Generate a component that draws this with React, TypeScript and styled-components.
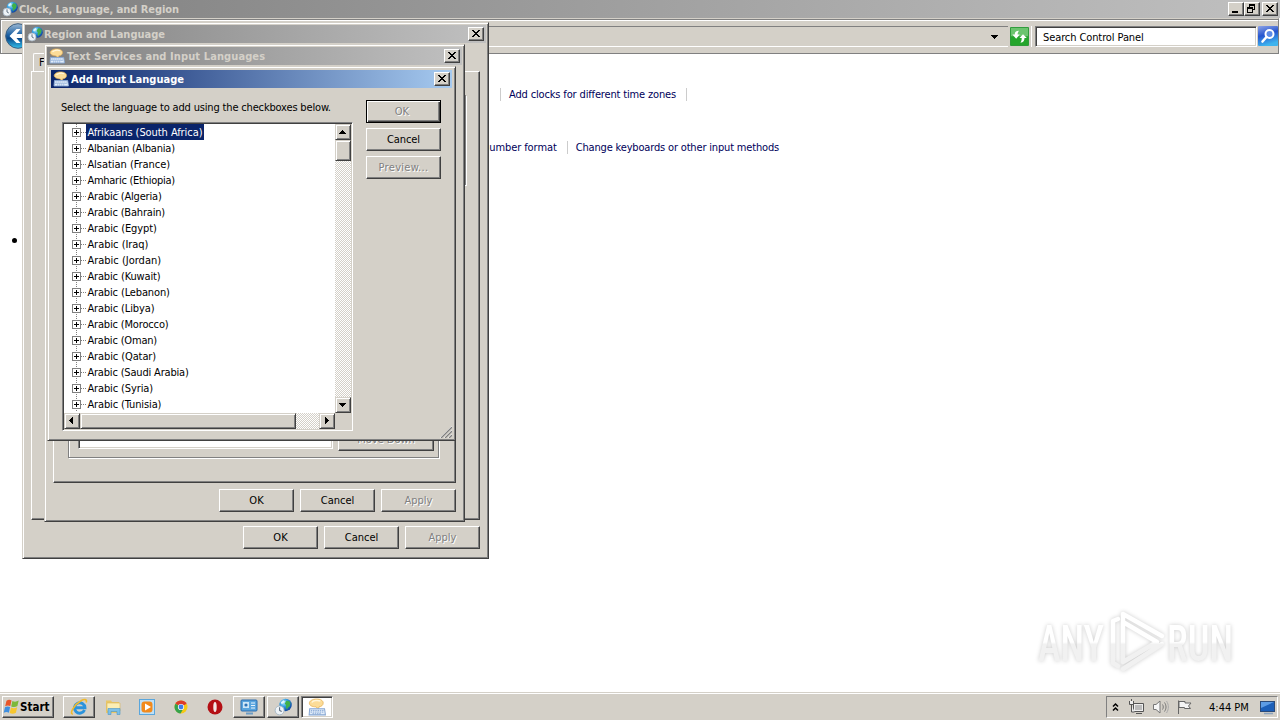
import React from 'react';
import styled, { createGlobalStyle, css } from 'styled-components';

const FACE = '#d4d0c8';
const FONT = "'DejaVu Sans Condensed', 'DejaVu Sans', sans-serif";

const Global = createGlobalStyle`
  * { box-sizing: border-box; }
  html, body { margin: 0; padding: 0; }
  body { width: 1280px; height: 720px; overflow: hidden; background: #fff; font: 11px ${FONT}; font-stretch: condensed; color: #000; }
`;

const raised = css`
  border: 1px solid;
  border-color: #fff #404040 #404040 #fff;
  box-shadow: inset -1px -1px 0 #808080;
`;

const sunken = css`
  border: 1px solid;
  border-color: #808080 #fff #fff #808080;
  box-shadow: inset 1px 1px 0 #404040, inset -1px -1px 0 ${FACE};
`;

const Txt = styled.span<{ $ls?: number; $b?: boolean }>`
  white-space: nowrap;
  letter-spacing: ${p => p.$ls ?? 0}px;
  font-weight: ${p => (p.$b ? 700 : 400)};
`;

const Desktop = styled.div`
  position: relative;
  display: flex;
  flex-direction: column;
  width: 1280px;
  height: 720px;
  overflow: hidden;
  background: #fff;
`;

const TitleBar = styled.div<{ $from: string; $to: string; $fg: string; $gap: number }>`
  display: flex;
  align-items: center;
  flex: none;
  height: 18px;
  padding: 0 2px;
  gap: ${p => p.$gap}px;
  background: linear-gradient(90deg, ${p => p.$from}, ${p => p.$to});
  color: ${p => p.$fg};
  & > svg { flex: none; }
`;

const Spacer = styled.div`flex: 1;`;

const CaptionGroup = styled.div`
  display: flex;
`;

const CaptionBtn = styled.div<{ $gap?: number }>`
  display: flex;
  flex: none;
  align-items: center;
  justify-content: center;
  width: 16px;
  height: 14px;
  padding: 0 1px 1px 0;
  margin-left: ${p => p.$gap ?? 0}px;
  background: ${FACE};
  ${raised}
`;

const NavBar = styled.div`
  display: flex;
  flex: none;
  align-items: stretch;
  height: 36px;
  width: 1279px;
  padding: 6px 0 6px 4px;
  background: ${FACE};
  border: solid #808080;
  border-width: 1px;
  border-top-color: ${FACE};
  box-shadow: inset 0 1px 0 #808080, inset 1px 2px 0 #fff;
  & > svg { flex: none; align-self: center; }
`;

const AddressBox = styled.div`
  display: flex;
  flex: 1;
  align-items: center;
  justify-content: flex-end;
  margin: 1px 0 0 4px;
  padding-right: 9px;
  border: solid;
  border-width: 1px 0;
  border-color: #808080 #fff #fff;
`;

const RefreshBtn = styled.div`
  display: flex;
  width: 24px;
  margin-top: 1px;
  padding: 1px 2px;
  border-right: 1px solid #fff;
`;

const SearchBox = styled.div`
  display: flex;
  align-items: center;
  width: 222px;
  margin: 1px 1px 0 3px;
  padding: 1px 0 0 7px;
  background: #fff;
  ${sunken}
`;

const Content = styled.div`
  flex: 1;
  display: flex;
  flex-direction: column;
  padding-top: 33px;
  color: #00005a;
`;

const LinkRow = styled.div<{ $left: number; $mb?: number }>`
  display: flex;
  align-items: center;
  height: 14px;
  margin: 0 0 ${p => p.$mb ?? 0}px ${p => p.$left}px;
`;

const Sep = styled.i<{ $l?: number; $r?: number }>`
  width: 1px;
  height: 13px;
  margin: 0 ${p => p.$r ?? 0}px 0 ${p => p.$l ?? 0}px;
  background: #ccc;
`;

const Dot = styled.div`
  width: 5px;
  height: 5px;
  margin: 84px 0 0 12px;
  border-radius: 50%;
  background: #000;
`;

const Win = styled.section<{ $x: number; $y: number; $w: number; $h: number; $frame: number }>`
  position: absolute;
  left: ${p => p.$x}px;
  top: ${p => p.$y}px;
  width: ${p => p.$w}px;
  height: ${p => p.$h}px;
  display: flex;
  flex-direction: column;
  padding: ${p => p.$frame - 1}px;
  background: ${FACE};
  border: 1px solid;
  border-color: ${FACE} #404040 #404040 ${FACE};
  box-shadow: inset 1px 1px 0 #fff, inset -1px -1px 0 #808080;
`;

const Button = styled.div<{ $disabled?: boolean; $default?: boolean; $w?: number }>`
  display: flex;
  flex: none;
  align-items: center;
  justify-content: center;
  width: ${p => p.$w ?? 75}px;
  height: 23px;
  padding: 0 0 1px;
  background: ${FACE};
  ${raised}
  ${p => p.$default && css`
    border-color: #000;
    box-shadow: inset 1px 1px 0 #fff, inset -1px -1px 0 #404040, inset -2px -2px 0 #808080;
  `}
  ${p => p.$disabled && css`color: #808080; text-shadow: 1px 1px 0 #fff;`}
`;

const ButtonRow = styled.div<{ $top: number; $right: number }>`
  display: flex;
  justify-content: flex-end;
  gap: 6px;
  margin: ${p => p.$top}px ${p => p.$right}px 0 0;
`;

const RegionTabs = styled.div`
  display: flex;
  height: 18px;
  margin: 10px 0 0 8px;
`;

const Tab = styled.div`
  width: 53px;
  padding: 2px 0 0 5px;
  border: solid #fff;
  border-width: 1px 0 0 1px;
  border-radius: 2px 0 0 0;
`;

const Page = styled.div<{ $w: number; $h: number; $x: number }>`
  display: flex;
  flex: none;
  width: ${p => p.$w}px;
  height: ${p => p.$h}px;
  margin-left: ${p => p.$x}px;
  ${raised}
`;

const Group = styled.div<{ $w: number; $h: number; $m: string }>`
  display: flex;
  align-items: flex-end;
  width: ${p => p.$w}px;
  height: ${p => p.$h}px;
  margin: ${p => p.$m};
  padding: 0 4px 6px 9px;
  gap: 5px;
  border: 1px solid #808080;
  box-shadow: 1px 1px 0 #fff, inset 1px 1px 0 #fff;
`;

const InstalledList = styled.div`
  width: 255px;
  height: 300px;
  margin-bottom: 2px;
  background: #fff;
  ${sunken}
`;

const DialogBody = styled.div`
  display: flex;
  padding: 11px 0 0 11px;
  gap: 13px;
`;

const LeftColumn = styled.div`
  width: 291px;
`;

const Prompt = styled.div`
  height: 23px;
  line-height: 16px;
  padding-top: 1px;
  margin-left: -1px;
`;

const ListFrame = styled.div`
  display: grid;
  grid-template-columns: 271px 16px;
  grid-template-rows: 289px 16px;
  width: 291px;
  height: 309px;
  padding: 1px;
  background: ${FACE};
  ${sunken}
`;

const Tree = styled.ul`
  margin: 0;
  padding: 0;
  list-style: none;
  background: #fff;
  overflow: hidden;
`;

const Node = styled.li`
  display: flex;
  align-items: center;
  height: 16px;
  padding-left: 8px;
  & > svg { flex: none; }
`;

const NodeLabel = styled.span<{ $sel: boolean }>`
  display: flex;
  align-items: center;
  height: 16px;
  padding: 0 2px 0 1.4px;
  ${p => p.$sel && css`background: #0a246a; color: #fff;`}
`;

const Scroll = styled.div<{ $v?: boolean }>`
  display: flex;
  flex-direction: ${p => (p.$v ? 'column' : 'row')};
  background: repeating-conic-gradient(#fff 0 25%, ${FACE} 0 50%) 0 0 / 2px 2px;
`;

const ScrollPart = styled.div<{ $w?: number; $h?: number }>`
  display: flex;
  flex: none;
  align-items: center;
  justify-content: center;
  width: ${p => p.$w ?? 16}px;
  height: ${p => p.$h ?? 16}px;
  background: ${FACE};
  border: 1px solid;
  border-color: ${FACE} #404040 #404040 ${FACE};
  box-shadow: inset 1px 1px 0 #fff, inset -1px -1px 0 #808080;
`;

const RightColumn = styled.div`
  display: flex;
  flex-direction: column;
  gap: 5px;
  padding-top: 1px;
`;

const Grip = styled.svg`
  position: absolute;
  right: 3px;
  bottom: 2px;
`;

const Watermark = styled.svg`
  position: absolute;
  left: 1030px;
  top: 602px;
  filter: drop-shadow(0 0 2px rgba(0, 0, 0, 0.2));
`;

const Taskbar = styled.footer`
  display: flex;
  flex: none;
  height: 28px;
  padding: 3px 2px 2px;
  background: ${FACE};
  box-shadow: inset 0 1px 0 #fff;
  border-top: 1px solid ${FACE};
`;

const StartBtn = styled.div`
  display: flex;
  align-items: center;
  width: 52px;
  height: 22px;
  margin-right: 9px;
  padding: 0 0 1px 0;
  font-size: 11.5px;
  ${raised}
  & > svg { flex: none; }
`;

const TaskBtn = styled.div<{ $state?: 'open' | 'active' }>`
  display: flex;
  align-items: center;
  justify-content: center;
  width: 32px;
  height: 22px;
  margin-right: 2px;
  ${p => p.$state === 'open' && raised}
  ${p => p.$state === 'active' && css`${sunken} background: #fff;`}
`;

const Tray = styled.div`
  display: flex;
  align-items: center;
  width: 172px;
  height: 22px;
  padding-left: 5px;
  gap: 7px;
  border: 1px solid;
  border-color: #808080 #fff #fff #808080;
  & > svg:first-child { margin-right: 2px; }
`;

const Clock = styled.div`
  margin: 0 4px 0 9px;
  white-space: nowrap;
`;

const CloseX = () => (
  <svg width="8" height="7" viewBox="0 0 8 7" shapeRendering="crispEdges">
    <path d="M0 0h2v1h1v1h2v-1h1v-1h2v1h-1v1h-1v1h-1v1h1v1h1v1h1v1h-2v-1h-1v-1h-2v1h-1v1h-2v-1h1v-1h1v-1h1v-1h-1v-1h-1v-1h-1z" />
  </svg>
);

const MinIcon = () => (
  <svg width="10" height="8" shapeRendering="crispEdges"><path d="M1 6h6v2H1z" /></svg>
);

const RestoreIcon = () => (
  <svg width="9" height="9" viewBox="0 0 9 9" shapeRendering="crispEdges">
    <path d="M2 0h6v6H6V5h1V2H3v1H2zM0 3h6v6H0zM1 5v3h4V5z" fillRule="evenodd" />
  </svg>
);

const GlobeClock = ({ size = 16 }: { size?: number }) => (
  <svg width={size} height={size} viewBox="0 0 16 16">
    <defs>
      <radialGradient id="globe" cx="0.35" cy="0.3" r="0.75">
        <stop offset="0" stopColor="#b5ecfb" /><stop offset="0.45" stopColor="#2f9be0" /><stop offset="1" stopColor="#0c3f9a" />
      </radialGradient>
    </defs>
    <circle cx="10.300" cy="6.200" r="5.500" fill="url(#globe)" />
    <path d="M11 2.500c1.500-.5 3 .3 3.600 1.800l-.6 3-1.600 1.200-.8 1.800-1-2 .2-2-1.300-1.300z" fill="#3fb04a" />
    <path d="M6 4l2.500-2 1.200 1L7 5.500z" fill="#e4f7fd" />
    <circle cx="5" cy="11" r="4" fill="#eef3f7" stroke="#a4b4c2" strokeWidth="0.800" />
    <path d="M5 8.300V11l1.800 1" stroke="#567" strokeWidth="0.900" fill="none" />
  </svg>
);

const KeyboardIcon = ({ size = 16 }: { size?: number }) => (
  <svg width={size} height={size} viewBox="0 0 16 16">
    <path d="M7.500.9c3.500 0 6 1.300 6 3.500S11.800 7.600 9.800 7.800L9.300 9.700 7 7.900C3.500 7.800 1.200 6.600 1.200 4.600S4 .9 7.500.9z" fill="#fcdc98" stroke="#e6b257" strokeWidth="0.700" />
    <path d="M3.500 4c1-1.800 5-2.300 7.500-1.300" stroke="#fff6dc" strokeWidth="1.300" fill="none" />
    <path d="M1.500 9.500h13.200l.8 5.500H1z" fill="#e2edfa" stroke="#86a6d2" strokeWidth="0.900" />
    <path d="M2.500 11h11.500M2.300 12.500h12M4 14h8" stroke="#7c9fd0" strokeWidth="0.800" strokeDasharray="1.300 0.700" />
  </svg>
);

const Plus = () => (
  <svg width="14" height="16" shapeRendering="crispEdges">
    <path d="M4.500 0v16M5 8.500h9" stroke="#808080" strokeDasharray="1 1" />
    <path d="M.5 4.500h8v8h-8z" fill="#fff" stroke="#808080" />
    <path d="M2 8.500h5M4.500 6v5" stroke="#000" />
  </svg>
);

const Arrow = ({ d }: { d: string }) => (
  <svg width="8" height="8" shapeRendering="crispEdges"><path d={d} /></svg>
);
const UP = 'M3 2h1v1h1v1h1v1h1v1H0V5h1V4h1V3h1z';
const DOWN = 'M0 2h7v1H6v1H5v1H4v1H3V5H2V4H1V3H0z';
const LEFT = 'M5 0v7H4V6H3V5H2V4H1V3h1V2h1V1h1V0z';
const RIGHT = 'M2 0v7h1V6h1V5h1V4h1V3H5V2H4V1H3V0z';

const BackOrb = () => (
  <svg width="26" height="26" viewBox="0 0 26 26">
    <defs>
      <linearGradient id="orb" x1="0" y1="0" x2="0" y2="1">
        <stop offset="0" stopColor="#9db9d4" /><stop offset="0.45" stopColor="#1d62a4" /><stop offset="0.6" stopColor="#0b4a8c" /><stop offset="1" stopColor="#35c3ee" />
      </linearGradient>
    </defs>
    <circle cx="13" cy="13" r="12.300" fill="url(#orb)" stroke="#3d5f80" />
    <path d="M4.500 13l7-7H15.500L11.500 11H22v4H11.500l4 5H11.500z" fill="#fff" />
  </svg>
);

const RefreshIcon = () => (
  <svg width="20" height="19" viewBox="0 0 20 20" preserveAspectRatio="none">
    <rect width="20" height="20" rx="1" fill="#2f9a3a" />
    <rect x="1" y="1" width="18" height="9" fill="#6cc46f" />
    <rect x="1" y="10" width="18" height="9" fill="#25a52c" />
    <path d="M9.500 4C6 4 5 5.500 5 8H2.500L6.500 12.300 10.300 8H8C8 6.500 8.300 5.500 9.500 4z" fill="#fff" />
    <path d="M11 16.500c3.200 0 4.200-2 4.200-4.800h2.500L13.700 7.500 10 11.700h2.300c0 2-.1 3.200-1.300 4.800z" fill="#fff" />
  </svg>
);

const SearchIcon = () => (
  <svg width="20" height="20" viewBox="0 0 20 20">
    <defs>
      <linearGradient id="srch" x1="0" y1="0" x2="0.3" y2="1">
        <stop offset="0" stopColor="#8fa4e6" /><stop offset="0.5" stopColor="#2555cf" /><stop offset="1" stopColor="#3fb4ee" />
      </linearGradient>
    </defs>
    <rect width="20" height="20" rx="1" fill="url(#srch)" />
    <circle cx="11.500" cy="8" r="4" fill="#5d8be6" stroke="#fff" strokeWidth="2" />
    <path d="M8.500 11L4.500 15.500" stroke="#fff" strokeWidth="2.600" strokeLinecap="round" />
  </svg>
);

const WinFlag = () => (
  <svg width="17" height="18" viewBox="0 0 17 16" preserveAspectRatio="none">
    <path d="M3.500 2.500C5.500 1.300 7 1.500 8.500 2.300L7.300 7.200C5.500 6.300 4 6.400 2.200 7.300z" fill="#e8562a" />
    <path d="M9.400 2.700c2 .9 4 .8 6.300-.4L14.400 7.200c-2 1.100-4 1.200-6.200.3z" fill="#7db83a" />
    <path d="M2 8.200c1.800-.9 3.300-1 5.100-.1L5.900 13c-1.700-.9-3.400-.8-5.200.1z" fill="#3f8fe0" />
    <path d="M8 8.500c2 .9 4 .8 6.200-.3L12.900 13c-2 1.100-4 1.200-6.200.4z" fill="#f7c62f" />
  </svg>
);

const IEIcon = () => (
  <svg width="18" height="18" viewBox="0 0 18 18">
    <path d="M14.500 12A5.200 5.200 0 1 1 14.900 9.700H6" fill="none" stroke="#2b93dc" strokeWidth="3" />
    <path d="M3 16C-1 16.500 3.500 7 11 2.800c3-1.800 6.500-2 5.200 1.700" stroke="#f0b92c" strokeWidth="1.600" fill="none" />
  </svg>
);

const FolderIcon = () => (
  <svg width="18" height="18" viewBox="0 0 18 18">
    <path d="M2 2.500h5l1 1.500h7v11H2z" fill="#e9c767" />
    <path d="M3 5h13v8H3z" fill="#fbeeb4" stroke="#d9b65a" strokeWidth="0.600" />
    <path d="M4 16.500V10.500h12v6h-3v-3H7v3z" fill="#7cc0e8" stroke="#4a93c4" strokeWidth="0.600" />
  </svg>
);

const MediaIcon = () => (
  <svg width="18" height="18" viewBox="0 0 18 18">
    <rect x="1.500" y="1.500" width="15" height="15" fill="#bfe0f6" stroke="#5aa6dc" />
    <rect x="3.500" y="3.500" width="11" height="11" rx="3" fill="#f28a1c" />
    <path d="M7 5.500v7L13 9z" fill="#fff" />
  </svg>
);

const ChromeIcon = () => (
  <svg width="16" height="16" viewBox="0 0 16 16">
    <circle cx="8" cy="8" r="6.500" fill="#f6c915" />
    <path d="M8 8L2.400 4.700A6.500 6.500 0 0 1 13.600 4.700z" fill="#dc3b2b" />
    <path d="M8 8L2.400 4.700A6.500 6.500 0 0 0 7.500 14.500L10.500 9.500z" fill="#35a24c" />
    <circle cx="8" cy="8" r="3.100" fill="#fff" /><circle cx="8" cy="8" r="2.400" fill="#3f7de8" />
  </svg>
);

const OperaIcon = () => (
  <svg width="16" height="16" viewBox="0 0 16 16">
    <circle cx="8" cy="8" r="7.500" fill="#b40f14" />
    <ellipse cx="8" cy="8" rx="1.700" ry="5" fill="#f3e6e4" />
  </svg>
);

const PanelIcon = () => (
  <svg width="18" height="18" viewBox="0 0 18 18">
    <rect x="1" y="2" width="16" height="11" rx="1" fill="#5aa5de" stroke="#2a6daf" />
    <rect x="3" y="4" width="6" height="6" fill="#cfe6f7" />
    <path d="M11 5h4M11 7.500h4M11 10h4" stroke="#e6f3fc" />
    <circle cx="6" cy="7" r="1.600" fill="#2d72b6" />
    <path d="M6 15.500h7" stroke="#6d9cc4" strokeWidth="2" />
  </svg>
);

const TrayIcons = () => (
  <>
    <svg width="7" height="11"><path d="M1 4.500L3.500 2 6 4.500M1 8.500L3.500 6 6 8.500" fill="none" stroke="#000" strokeWidth="1.500" /></svg>
    <svg width="17" height="16" viewBox="0 0 17 16">
      <path d="M5.500 4.500h10v8h-10zM8 14.500h6" fill="#eee" stroke="#555" />
      <path d="M7 6h7v5H7z" fill="#bbb" />
      <path d="M1.500 2v3.500h4V2M3.500 0v2M3.500 5.500V13h3" fill="#eee" stroke="#555" />
    </svg>
    <svg width="17" height="16" viewBox="0 0 17 16" fill="none" stroke="#777">
      <path d="M1.500 5.500h2.500l4-3.500v12L4 10.500H1.500z" fill="#f6f6f6" />
      <path d="M10.500 5.500c1 1.500 1 3.500 0 5M12.500 3.500c2 3 2 6 0 9" /><path d="M14.500 2c2.500 4 2.500 8 0 12" stroke="#aaa" />
    </svg>
    <svg width="17" height="16" viewBox="0 0 17 16"><path d="M2.500 1.500V15M3 2.500h6v1.500h6l-2.500 3 2 2.500H8.500V8.500H3z" fill="#f4f4f4" stroke="#666" /></svg>
  </>
);

const DesktopIcon = () => (
  <svg width="16" height="16" viewBox="0 0 16 16">
    <rect x="0.500" y="2.500" width="14" height="10" fill="#1c5fb8" stroke="#2b4a78" />
    <path d="M1 3h13L1 9z" fill="#5d9ce4" />
    <path d="M4 14.500h9" stroke="#8ba3bd" strokeWidth="1.500" />
  </svg>
);

const LANGS: [string, number][] = [
  ['Afrikaans (South Africa)', -0.07], ['Albanian (Albania)', -0.2], ['Alsatian (France)', -0.04], ['Amharic (Ethiopia)', -0.26],
  ['Arabic (Algeria)', -0.17], ['Arabic (Bahrain)', -0.18], ['Arabic (Egypt)', -0.1], ['Arabic (Iraq)', -0.04], ['Arabic (Jordan)', 0],
  ['Arabic (Kuwait)', -0.14], ['Arabic (Lebanon)', -0.14], ['Arabic (Libya)', -0.12], ['Arabic (Morocco)', -0.16], ['Arabic (Oman)', -0.18],
  ['Arabic (Qatar)', -0.1], ['Arabic (Saudi Arabia)', -0.18], ['Arabic (Syria)', -0.12], ['Arabic (Tunisia)', -0.12],
];

const INACTIVE = { $from: '#808080', $to: '#c0c0c0', $fg: '#d4d0c8' };

export default function App() {
  return (
    <Desktop>
      <Global />
      <TitleBar {...INACTIVE} $gap={1}>
        <GlobeClock />
        <Txt $b $ls={-0.07}>Clock, Language, and Region</Txt>
        <Spacer />
        <CaptionGroup>
          <CaptionBtn><MinIcon /></CaptionBtn>
          <CaptionBtn><RestoreIcon /></CaptionBtn>
          <CaptionBtn $gap={2}><CloseX /></CaptionBtn>
        </CaptionGroup>
      </TitleBar>
      <NavBar>
        <BackOrb />
        <AddressBox><Arrow d={DOWN} /></AddressBox>
        <RefreshBtn><RefreshIcon /></RefreshBtn>
        <SearchBox><Txt $ls={-0.1}>Search Control Panel</Txt></SearchBox>
        <SearchIcon />
      </NavBar>
      <Content>
        <LinkRow $left={500} $mb={39}>
          <Sep $r={8} /><Txt $ls={-0.15}>Add clocks for different time zones</Txt><Sep $l={10} />
        </LinkRow>
        <LinkRow $left={483}>
          <Txt $ls={-0.08}>number format</Txt><Sep $l={10} $r={8} /><Txt $ls={-0.17}>Change keyboards or other input methods</Txt>
        </LinkRow>
        <Dot />
      </Content>

      <Watermark width="220" height="80" viewBox="0 0 220 80">
        <defs>
          <linearGradient id="mark" gradientUnits="userSpaceOnUse" x1="0" y1="0" x2="0" y2="80">
            <stop offset="0.5" stopColor="#fff" /><stop offset="0.53" stopColor="#f1f1f1" />
          </linearGradient>
        </defs>
        <g fill="url(#mark)" fontFamily="Roboto, sans-serif" fontSize="50" fontWeight="500">
          <text x="8" y="59" textLength="66" lengthAdjust="spacingAndGlyphs">ANY</text>
          <text x="137" y="59" textLength="66" lengthAdjust="spacingAndGlyphs">RUN</text>
        </g>
        <path
          d="M88 17l-5 2v42l5 3M93 60V12l39 22M93 20l34 20-34 20M93 67l39-25"
          fill="none" stroke="url(#mark)" strokeWidth="4.500" strokeLinecap="round" strokeLinejoin="round"
        />
      </Watermark>

      <Win $x={22} $y={22} $w={467} $h={537} $frame={3}>
        <TitleBar {...INACTIVE} $gap={1}>
          <GlobeClock />
          <Txt $b>Region and Language</Txt>
          <Spacer />
          <CaptionBtn><CloseX /></CaptionBtn>
        </TitleBar>
        <RegionTabs><Tab>Formats</Tab></RegionTabs>
        <Page $w={449} $h={449} $x={6}>
          <Group $w={422} $h={90} $m="23px 0 0 12px" />
        </Page>
        <ButtonRow $top={6} $right={6}>
          <Button>OK</Button><Button>Cancel</Button><Button $disabled>Apply</Button>
        </ButtonRow>
      </Win>

      <Win $x={44} $y={44} $w={421} $h={478} $frame={3}>
        <TitleBar {...INACTIVE} $gap={2}>
          <KeyboardIcon />
          <Txt $b $ls={0.1}>Text Services and Input Languages</Txt>
          <Spacer />
          <CaptionBtn><CloseX /></CaptionBtn>
        </TitleBar>
        <RegionTabs />
        <Page $w={403} $h={390} $x={6}>
          <Group $w={371} $h={350} $m="14px 0 0 14px">
            <InstalledList />
            <Button $w={96} $disabled>Move Down</Button>
          </Group>
        </Page>
        <ButtonRow $top={6} $right={6}>
          <Button>OK</Button><Button>Cancel</Button><Button $disabled>Apply</Button>
        </ButtonRow>
      </Win>

      <Win $x={47} $y={66} $w={409} $h={375} $frame={4}>
        <TitleBar $from="#0a246a" $to="#a6caf0" $fg="#fff" $gap={2}>
          <KeyboardIcon />
          <Txt $b>Add Input Language</Txt>
          <Spacer />
          <CaptionBtn><CloseX /></CaptionBtn>
        </TitleBar>
        <DialogBody>
          <LeftColumn>
            <Prompt><Txt $ls={-0.165}>Select the language to add using the checkboxes below.</Txt></Prompt>
            <ListFrame>
              <Tree>
                {LANGS.map(([name, ls], i) => (
                  <Node key={name}><Plus /><NodeLabel $sel={i === 0}><Txt $ls={ls}>{name}</Txt></NodeLabel></Node>
                ))}
              </Tree>
              <Scroll $v>
                <ScrollPart><Arrow d={UP} /></ScrollPart>
                <ScrollPart $h={21} />
                <Spacer />
                <ScrollPart><Arrow d={DOWN} /></ScrollPart>
              </Scroll>
              <Scroll>
                <ScrollPart><Arrow d={LEFT} /></ScrollPart>
                <ScrollPart $w={216} />
                <Spacer />
                <ScrollPart><Arrow d={RIGHT} /></ScrollPart>
              </Scroll>
            </ListFrame>
          </LeftColumn>
          <RightColumn>
            <Button $default $disabled><Txt>OK&nbsp;</Txt></Button>
            <Button><Txt $ls={-0.1}>Cancel</Txt></Button>
            <Button $disabled><Txt $ls={0.3}>Preview...</Txt></Button>
          </RightColumn>
        </DialogBody>
        <Grip width="12" height="12" viewBox="0 0 12 12">
          <path d="M0 12L12 0M4 12l8-8M8 12l4-4" stroke="#fff" />
          <path d="M1 12L12 1M5 12l7-7M9 12l3-3" stroke="#808080" strokeWidth="1.300" />
        </Grip>
      </Win>

      <Taskbar>
        <StartBtn><WinFlag /><Txt $b>Start</Txt></StartBtn>
        <TaskBtn $state="open"><IEIcon /></TaskBtn>
        <TaskBtn><FolderIcon /></TaskBtn>
        <TaskBtn><MediaIcon /></TaskBtn>
        <TaskBtn><ChromeIcon /></TaskBtn>
        <TaskBtn><OperaIcon /></TaskBtn>
        <TaskBtn $state="open"><PanelIcon /></TaskBtn>
        <TaskBtn $state="open"><GlobeClock size={18} /></TaskBtn>
        <TaskBtn $state="active"><KeyboardIcon size={18} /></TaskBtn>
        <Spacer />
        <Tray><TrayIcons /><Clock>4:44 PM</Clock><DesktopIcon /></Tray>
      </Taskbar>
    </Desktop>
  );
}
